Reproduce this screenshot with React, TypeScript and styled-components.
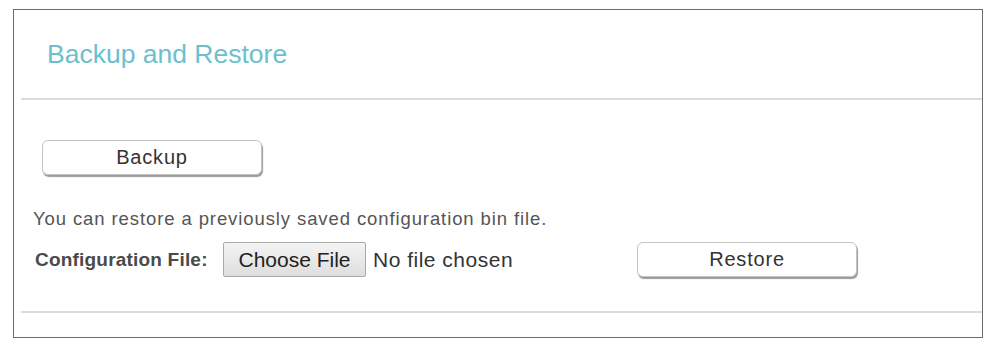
import React from "react";
import styled, { createGlobalStyle } from "styled-components";

const Global = createGlobalStyle`
  html, body { margin: 0; padding: 0; background: #fff; }
  body { font-family: "Liberation Sans", Arial, sans-serif; }
`;

const Page = styled.div`
  padding: 9px 0 0 13px;
  width: 990px;
  height: 348px;
  box-sizing: border-box;
`;

const Panel = styled.div`
  width: 970px;
  height: 329px;
  box-sizing: border-box;
  border: 1px solid #6b6b6b;
  display: flex;
  flex-direction: column;
`;

const Header = styled.div`
  height: 88px;
  display: flex;
  align-items: center;
  padding-left: 33px;
  box-sizing: border-box;
`;

const Title = styled.h1`
  margin: 0;
  font-weight: normal;
  font-size: 26.5px;
  color: #6cc0ce;
`;

const Divider = styled.div`
  margin-left: 7px;
  height: 2px;
  background: #dcdcdc;
`;

const Body = styled.div`
  display: flex;
  flex-direction: column;
  padding: 40px 0 0 19px;
  height: 211px;
  box-sizing: border-box;
`;

const PillButton = styled.button<{ $offset?: number }>`
  width: 220px;
  height: 35px;
  background: #fff;
  border: 1px solid #c4c4c4;
  border-radius: 6px;
  box-shadow: 1px 2px 1px #9a9a9a;
  font-family: "Liberation Sans", Arial, sans-serif;
  font-size: 20px;
  letter-spacing: 0.8px;
  color: #333;
  padding: 0;
  margin-left: ${(p) => p.$offset ?? 0}px;
`;

const Note = styled.p`
  margin: 33px 0 0 0;
  font-size: 18.5px;
  letter-spacing: 0.9px;
  color: #555;
  line-height: 22px;
`;

const Row = styled.div`
  display: flex;
  align-items: center;
  margin-top: 12px;
`;

const Label = styled.span`
  font-weight: bold;
  font-size: 19px;
  letter-spacing: 0.2px;
  color: #4a4a4a;
  width: 188px;
  padding-left: 2px;
`;

const ChooseButton = styled.span`
  display: inline-flex;
  align-items: center;
  justify-content: center;
  width: 143px;
  height: 35px;
  box-sizing: border-box;
  border: 1px solid #a9a9a9;
  border-radius: 2px;
  background: linear-gradient(#f4f4f4, #dedede);
  font-size: 21px;
  color: #222;
`;

const FileName = styled.span`
  font-size: 21px;
  letter-spacing: 0.5px;
  color: #333;
  margin-left: 7px;
  width: 264px;
`;

export default function App() {
  return (
    <Page>
      <Global />
      <Panel>
        <Header>
          <Title>Backup and Restore</Title>
        </Header>
        <Divider />
        <Body>
          <PillButton $offset={9}>Backup</PillButton>
          <Note>You can restore a previously saved configuration bin file.</Note>
          <Row>
            <Label>Configuration File:</Label>
            <ChooseButton>Choose File</ChooseButton>
            <FileName>No file chosen</FileName>
            <PillButton>Restore</PillButton>
          </Row>
        </Body>
        <Divider />
      </Panel>
    </Page>
  );
}
